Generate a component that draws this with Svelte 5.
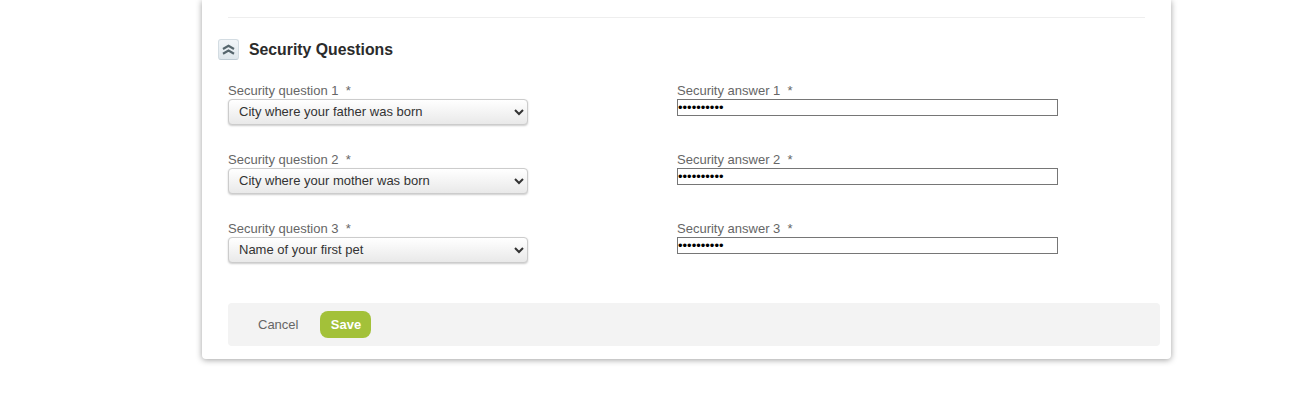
<script>
  const rows = [
    { n: 1, q: 'City where your father was born' },
    { n: 2, q: 'City where your mother was born' },
    { n: 3, q: 'Name of your first pet' }
  ];
</script>

<div class="page">
  <main class="card">
    <hr class="rule" />
    <header class="head">
      <button class="toggle" type="button" aria-label="Collapse">
        <svg width="13" height="11" viewBox="0 0 13 11" fill="none" stroke="#56666d" stroke-width="2.2">
          <path d="M1 5 6.5 1.8 12 5" />
          <path d="M1 9.8 6.5 6.6 12 9.8" />
        </svg>
      </button>
      <h2>Security Questions</h2>
    </header>

    <div class="grid">
      {#each rows as r}
        <div class="field">
          <label for={`q${r.n}`}>Security question {r.n}&nbsp; *</label>
          <select id={`q${r.n}`}>
            <option>{r.q}</option>
          </select>
        </div>
        <div class="field">
          <label for={`a${r.n}`}>Security answer {r.n}&nbsp; *</label>
          <input id={`a${r.n}`} type="password" value="aaaaaaaaaa" />
        </div>
      {/each}
    </div>

    <footer class="actions">
      <button class="cancel" type="button">Cancel</button>
      <button class="save" type="button">Save</button>
    </footer>
  </main>
</div>

<style>
  :global(body) {
    margin: 0;
    background: #fff;
    font-family: "Liberation Sans", Arial, sans-serif;
  }
  .page {
    height: 404px;
    overflow: hidden;
    padding-left: 202px;
    box-sizing: border-box;
  }
  .card {
    width: 969px;
    height: 359px;
    box-sizing: border-box;
    padding: 17px 11px 0 26px;
    background: #fff;
    border-radius: 0 0 4px 4px;
    box-shadow: 0 1px 6px rgba(0, 0, 0, 0.38);
    display: flex;
    flex-direction: column;
    clip-path: inset(0 -12px -12px -12px);
  }
  .rule {
    margin: 0 15px 0 0;
    border: 0;
    border-top: 1px solid #eeeeee;
    height: 0;
  }
  .head {
    display: flex;
    align-items: flex-start;
    gap: 10px;
    margin: 21px 0 0 -10px;
    height: 22px;
  }
  .toggle {
    width: 21px;
    height: 21px;
    padding: 0;
    display: flex;
    align-items: center;
    justify-content: center;
    border: 1px solid #d3dce2;
    border-bottom-color: #bfcbd3;
    border-radius: 3px;
    background: linear-gradient(#f1f5f8, #dfe7ec);
  }
  h2 {
    margin: 0;
    font-size: 15.8px;
    font-weight: 700;
    line-height: 22px;
    color: #2b2b2b;
  }
  .grid {
    display: grid;
    grid-template-columns: 449px 1fr;
    grid-auto-rows: 69px;
    margin-top: 21px;
  }
  .field {
    display: flex;
    flex-direction: column;
    align-items: flex-start;
  }
  label {
    font-size: 13px;
    line-height: 17px;
    color: #666;
  }
  select {
    width: 300px;
    height: 26px;
    box-sizing: border-box;
    padding: 0 5px 2px 6px;
    border: 1px solid #ccc;
    border-radius: 4px;
    background-color: #f2f2f2;
    background-image: linear-gradient(#fff, #e9e9e9);
    box-shadow: 0 1px 2px rgba(0, 0, 0, 0.2);
    font: 13px "Liberation Sans", Arial, sans-serif;
    color: #333;
  }
  input {
    width: 381px;
    height: 17px;
    box-sizing: border-box;
    padding: 0;
    border: 1px solid #767676;
    background: #fff;
    font: 13px "Liberation Sans", Arial, sans-serif;
    color: #000;
  }
  .actions {
    display: flex;
    align-items: center;
    gap: 22px;
    height: 43px;
    margin-top: 14px;
    padding-left: 30px;
    background: #f3f3f3;
    border-radius: 4px;
  }
  .cancel {
    padding: 0;
    border: 0;
    background: none;
    font: 13px "Liberation Sans", Arial, sans-serif;
    color: #666;
  }
  .save {
    width: 51px;
    height: 27px;
    padding: 0;
    border: 0;
    border-radius: 8px;
    background: #a3c139;
    color: #fff;
    font: 700 13px "Liberation Sans", Arial, sans-serif;
  }
</style>
